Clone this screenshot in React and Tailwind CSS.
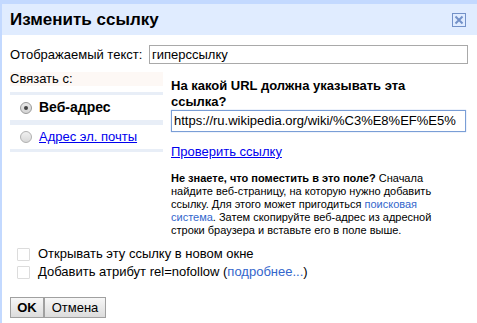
export default function App() {
  return (
    <div
      className="w-[477px] h-[323px] bg-[#c3d9ff] pt-[4px] pl-[2px] overflow-hidden text-black"
      style={{ fontFamily: '"Liberation Sans", Arial, sans-serif' }}
    >
      <div className="bg-white h-full">
        {/* header */}
        <div className="h-[31px] bg-[#e0ecff] flex items-center justify-between pl-[8px] pr-[11px]">
          <h1 className="text-[17px] font-bold leading-[20px]">Изменить ссылку</h1>
          <div className="w-[14px] h-[14px] border border-[#7391c8] flex items-center justify-center">
            <svg width="10" height="10" viewBox="0 0 10 10">
              <path d="M1.5 1.5 L8.5 8.5 M8.5 1.5 L1.5 8.5" stroke="#7391c8" strokeWidth="2" />
            </svg>
          </div>
        </div>

        <div className="pl-[8px] pr-[9px]">
          <div className="flex items-center mt-[10px] text-[13px] leading-[19px]">
            <span className="w-[139px]">Отображаемый текст:</span>
            <div className="flex-1 h-[19px] border border-[#a9a9a9] px-[2px] leading-[17px]">гиперссылку</div>
          </div>

          <div className="flex mt-[8px]">
            <div className="w-[153px]">
              <div className="text-[13px] bg-[#fdf8f5] h-[14px] leading-[14px]">Связать с:</div>
              <div className="bg-[#e8eef7] py-[3px] mt-[6px] flex flex-col gap-[5px]">
                <div className="bg-white h-[25px] flex items-center pl-[10px] gap-[7px]">
                  <span className="w-[12px] h-[12px] rounded-full border border-[#9a9a9a] bg-gradient-to-b from-[#e8e8e8] to-[#d4d4d4] flex items-center justify-center">
                    <span className="w-[4px] h-[4px] rounded-full bg-[#444]" />
                  </span>
                  <span className="text-[14px] font-bold leading-[17px]">Веб-адрес</span>
                </div>
                <div className="bg-white h-[24px] flex items-center pl-[10px] gap-[7px]">
                  <span className="w-[12px] h-[12px] rounded-full border border-[#b0b0b0] bg-gradient-to-b from-[#f0f0f0] to-[#d8d8d8]" />
                  <span className="text-[13px] leading-[16px] text-[#0000ee] underline">Адрес эл. почты</span>
                </div>
              </div>
            </div>

            <div className="flex-1 pl-[8px] pt-[6px]">
              <div className="text-[13px] font-bold leading-[16px]">
                На какой URL должна указывать эта
                <br />
                ссылка?
              </div>
              <div className="w-[295px] h-[22px] border border-[#7a9ed6] shadow-[0_0_1px_#9ab9ee] px-[2px] text-[13px] leading-[20px] overflow-hidden whitespace-nowrap">
                https://ru.wikipedia.org/wiki/%C3%E8%EF%E5%
              </div>
              <div className="mt-[12px] text-[13px] leading-[16px] text-[#0000ee] underline">Проверить ссылку</div>
              <p className="mt-[12px] text-[11px] leading-[13px] w-[270px]">
                <b>Не знаете, что поместить в это поле?</b> Сначала найдите веб-страницу, на которую нужно добавить
                ссылку. Для этого может пригодиться <span className="text-[#3366cc]">поисковая система</span>. Затем
                скопируйте веб-адрес из адресной строки браузера и вставьте его в поле выше.
              </p>
            </div>
          </div>

          <div className="mt-[8px] pl-[7px] flex flex-col text-[13px] leading-[18px]">
            <label className="flex items-center gap-[8px] h-[18px]">
              <span className="w-[13px] h-[13px] border border-[#dcdcdc] rounded-[1px]" />
              Открывать эту ссылку в новом окне
            </label>
            <label className="flex items-center gap-[8px] h-[18px]">
              <span className="w-[13px] h-[13px] border border-[#dcdcdc] rounded-[1px]" />
              <span>
                Добавить атрибут rel=nofollow (<span className="text-[#3366cc]">подробнее...</span>)
              </span>
            </label>
          </div>

          <div className="mt-[16px] flex text-[13px] leading-[19px]">
            <button className="h-[21px] w-[34px] border border-[#a0a0a0] bg-gradient-to-b from-[#f7f7f7] to-[#dcdcdc] font-bold">
              OK
            </button>
            <button className="h-[21px] w-[62px] border border-[#a0a0a0] bg-gradient-to-b from-[#f7f7f7] to-[#dcdcdc]">
              Отмена
            </button>
          </div>
        </div>
      </div>
    </div>
  );
}
